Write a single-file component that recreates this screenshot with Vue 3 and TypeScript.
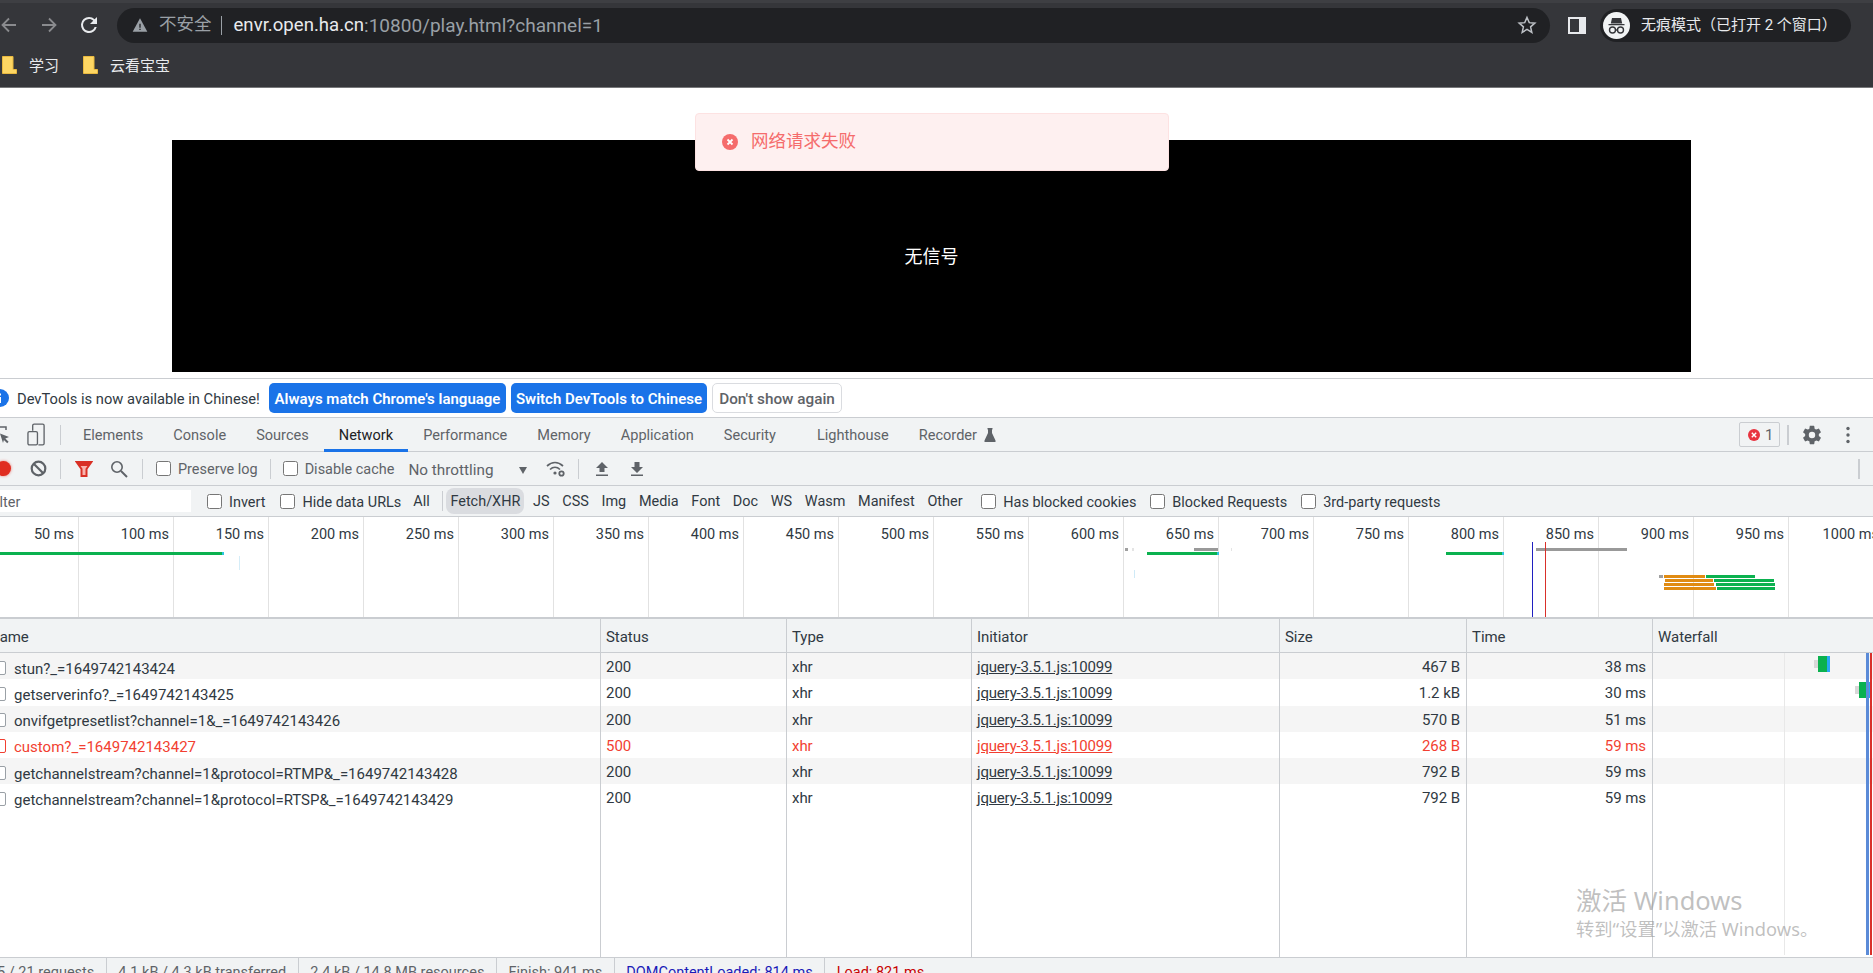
<script setup lang="ts">
const tabs = ['Elements', 'Console', 'Sources', 'Network', 'Performance', 'Memory', 'Application', 'Security', 'Lighthouse']
const types = ['All', 'Fetch/XHR', 'JS', 'CSS', 'Img', 'Media', 'Font', 'Doc', 'WS', 'Wasm', 'Manifest', 'Other']
const ticks = Array.from({ length: 20 }, (_, i) => (i + 1) * 50)
const tickX = (ms: number) => 77.5 + (ms / 50 - 1) * 95

interface Bar { x: number; y: number; w: number; c: string; h?: number }
const bars: Bar[] = [
  { x: 0, y: 552, w: 222, c: '#0bb14f' }, { x: 222, y: 552, w: 2, c: '#2bc4e0' },
  { x: 239, y: 556, w: 1, h: 14, c: '#d5edf8' },
  { x: 1125, y: 548, w: 3, c: '#a0a0a0' }, { x: 1132, y: 548, w: 2, c: '#e4e4e4' }, { x: 1231, y: 548, w: 1, c: '#e4e4e4' },
  { x: 1134, y: 570, w: 1, h: 8, c: '#cfeaf7' },
  { x: 1147, y: 552, w: 70, c: '#0bb14f' }, { x: 1217, y: 552, w: 2, c: '#2bc4e0' }, { x: 1194, y: 548, w: 24, c: '#999' },
  { x: 1446, y: 552, w: 56, c: '#0bb14f' }, { x: 1502, y: 552, w: 2, c: '#2bc4e0' },
  { x: 1536, y: 548, w: 91, c: '#999' },
  { x: 1659, y: 575, w: 4, c: '#a0a0a0' }, { x: 1664, y: 575, w: 41, c: '#e08b12' }, { x: 1706, y: 575, w: 49, c: '#0bb14f' },
  { x: 1665, y: 579, w: 48, c: '#e08b12' }, { x: 1714, y: 579, w: 60, c: '#0bb14f' },
  { x: 1664, y: 583, w: 50, c: '#e08b12' }, { x: 1716, y: 583, w: 59, c: '#0bb14f' },
  { x: 1664, y: 587, w: 52, c: '#e08b12' }, { x: 1717, y: 587, w: 58, c: '#0bb14f' }
]

interface Row { name: string; status: number; size: string; time: string; err?: boolean; fall?: number }
const rows: Row[] = [
  { name: 'stun?_=1649742143424', status: 200, size: '467 B', time: '38 ms', fall: 1814 },
  { name: 'getserverinfo?_=1649742143425', status: 200, size: '1.2 kB', time: '30 ms', fall: 1855 },
  { name: 'onvifgetpresetlist?channel=1&_=1649742143426', status: 200, size: '570 B', time: '51 ms' },
  { name: 'custom?_=1649742143427', status: 500, size: '268 B', time: '59 ms', err: true },
  { name: 'getchannelstream?channel=1&protocol=RTMP&_=1649742143428', status: 200, size: '792 B', time: '59 ms' },
  { name: 'getchannelstream?channel=1&protocol=RTSP&_=1649742143429', status: 200, size: '792 B', time: '59 ms' }
]
</script>

<template>
  <div class="page">
    <header class="chrome">
      <div class="nav-row">
        <svg class="ic back" viewBox="0 0 20 20"><path d="M17 10H4M10 3.5 3.5 10l6.5 6.5" fill="none" stroke="#8a8b8e" stroke-width="1.8" /></svg>
        <svg class="ic fwd" viewBox="0 0 20 20"><path d="M3 10h13M10 3.5l6.5 6.5-6.500 6.500" fill="none" stroke="#8a8b8e" stroke-width="1.8" /></svg>
        <svg class="ic reload" viewBox="0 0 24 24"><path fill="#e8eaed" d="M17.65 6.350A7.958 7.958 0 0 0 12 4a8 8 0 1 0 7.730 10h-2.080A6 6 0 1 1 12 6c1.660 0 3.140.690 4.220 1.780L13 11h7V4l-2.350 2.350z" /></svg>
        <div class="omnibox">
          <svg class="warn" viewBox="0 0 24 24"><path fill="#9aa0a6" d="M1 22h22L12 2 1 22z" /><path fill="#202124" d="M11 10h2v6h-2zM11 17.500h2v2h-2z" /></svg>
          <span class="insecure">不安全</span>
          <span class="sep"></span>
          <span class="host">envr.open.ha.cn</span><span class="path">:10800/play.html?channel=1</span>
          <svg class="star" viewBox="0 0 24 24"><path d="m12 3 2.700 6.200 6.700.6-5.100 4.400 1.500 6.600L12 17.300l-5.800 3.500 1.500-6.600-5.100-4.400 6.700-.6z" fill="none" stroke="#bdc1c6" stroke-width="1.800" /></svg>
        </div>
        <span class="side-panel"><i></i></span>
        <div class="incognito">
          <svg class="avatar" viewBox="0 0 27 27"><circle cx="13.500" cy="13.500" r="13.500" fill="#f1f3f4" /><path fill="#35363a" d="M9 6h9l1.200 5.500H7.800zM5.500 12h16v1.300h-16z" /><g fill="none" stroke="#35363a" stroke-width="1.400"><circle cx="9.500" cy="18" r="3" /><circle cx="17.500" cy="18" r="3" /><path d="M12.500 18h2" /></g></svg>
          <span class="inc-text">无痕模式（已打开 2 个窗口）</span>
        </div>
      </div>
      <div class="bookmarks">
        <svg class="folder" viewBox="0 0 15 18"><path fill="#fdd663" stroke="#e9b93f" d="M.5.500h10.500v13l3.500 0v4H.5z" /></svg>
        <span class="bm">学习</span>
        <svg class="folder folder-next" viewBox="0 0 15 18"><path fill="#fdd663" stroke="#e9b93f" d="M.5.500h10.500v13l3.500 0v4H.5z" /></svg>
        <span class="bm">云看宝宝</span>
      </div>
    </header>

    <main class="content">
      <div class="video">无信号</div>
      <div class="toast">
        <svg class="toast-ic" viewBox="0 0 16 16"><circle cx="8" cy="8" r="8" fill="#f56c6c" /><path d="m5.500 5.500 5 5m0-5-5 5" stroke="#fff" stroke-width="1.800" /></svg>
        <span class="toast-text">网络请求失败</span>
      </div>
    </main>

    <section class="devtools">
      <div class="infobar">
        <svg class="info" viewBox="0 0 18 18"><circle cx="9" cy="9" r="9" fill="#1a73e8" /><path fill="#fff" d="M8 8h2v6H8zM8 4.500h2v2H8z" /></svg>
        <span class="info-text">DevTools is now available in Chinese!</span>
        <button class="btn primary b1">Always match Chrome's language</button>
        <button class="btn primary b2">Switch DevTools to Chinese</button>
        <button class="btn plain">Don't show again</button>
      </div>

      <div class="tabbar">
        <svg class="inspect" viewBox="0 0 20 20"><path d="M1 2h14v3" fill="none" stroke="#5f6368" stroke-width="1.500" /><path fill="#5f6368" d="M9 8.500l9 3.500-3.700 1.500 3.300 3.300-1.400 1.400-3.300-3.300L12 18z" /></svg>
        <svg class="device" viewBox="0 0 20 24"><path fill="none" stroke="#5f6368" stroke-width="1.400" d="M6 8V2.500A1.500 1.500 0 0 1 7.500 1h9A1.500 1.500 0 0 1 18 2.500v19a1.500 1.500 0 0 1-1.500 1.500H12" /><rect x="1" y="9" width="10" height="14" rx="1.500" fill="none" stroke="#5f6368" stroke-width="1.400" /></svg>
        <span class="vline tab-sep"></span>
        <div class="tabs">
          <span v-for="t in tabs" :key="t" class="tab" :class="{ active: t === 'Network', gapped: t === 'Lighthouse' }">{{ t }}</span>
          <span class="tab rec">Recorder
            <svg class="flask" viewBox="0 0 12 14"><path fill="#5f6368" d="M3.500 0h5v1.500H8V5l3.500 7.500V14H.5v-1.500L4 5V1.500h-.5z" /></svg>
          </span>
        </div>
        <div class="tab-right">
          <span class="err-badge">
            <svg viewBox="0 0 14 14"><circle cx="7" cy="7" r="6" fill="#e8333f" /><path d="m4.800 4.800 4.400 4.400m0-4.400-4.400 4.400" stroke="#fff" stroke-width="1.400" /></svg>
            <b>1</b>
          </span>
          <span class="vline rsep"></span>
          <svg class="gear" viewBox="0 0 24 24"><path fill="#5f6368" d="M19.430 12.980c.040-.320.070-.640.070-.980s-.030-.660-.070-.980l2.110-1.650c.190-.150.240-.420.120-.640l-2-3.460c-.120-.220-.390-.300-.610-.220l-2.490 1c-.520-.400-1.080-.730-1.690-.980l-.380-2.650A.488.488 0 0 0 14 2h-4c-.250 0-.460.180-.490.420l-.380 2.650c-.610.250-1.170.590-1.690.980l-2.490-1a.566.566 0 0 0-.180-.030c-.170 0-.340.090-.430.250l-2 3.460c-.130.220-.070.490.120.640l2.110 1.650c-.040.320-.070.650-.070.980s.030.660.070.980l-2.110 1.650c-.190.150-.240.420-.120.640l2 3.460c.120.220.390.300.610.220l2.490-1c.520.400 1.080.730 1.690.980l.380 2.650c.030.240.240.420.490.420h4c.250 0 .460-.180.490-.420l.380-2.650c.610-.250 1.170-.590 1.690-.980l2.490 1c.060.020.120.030.180.030.170 0 .340-.090.430-.250l2-3.460c.120-.220.070-.490-.120-.640l-2.110-1.650zM12 15.500a3.500 3.500 0 1 1 0-7 3.500 3.500 0 0 1 0 7z" /></svg>
          <svg class="kebab" viewBox="0 0 4 18"><circle cx="2" cy="2.500" r="1.700" fill="#5f6368" /><circle cx="2" cy="9" r="1.700" fill="#5f6368" /><circle cx="2" cy="15.500" r="1.700" fill="#5f6368" /></svg>
        </div>
      </div>

      <div class="toolbar">
        <span class="record"></span>
        <svg class="clear" viewBox="0 0 17 17"><circle cx="8.500" cy="8.500" r="6.800" fill="none" stroke="#5f6368" stroke-width="2.200" /><path d="m4 4 9 9" stroke="#5f6368" stroke-width="2.200" /></svg>
        <span class="vline t1"></span>
        <svg class="funnel" viewBox="0 0 18 18"><path d="M1.500 2h15l-5 7v7h-5V9z" fill="#f8b4ae" stroke="#d93025" stroke-width="2" /><path d="M1.500 2h15L13.500 6h-9z" fill="#d93025" /></svg>
        <svg class="search" viewBox="0 0 18 18"><circle cx="7" cy="7" r="5.200" fill="none" stroke="#5f6368" stroke-width="1.600" /><path d="m11 11 6 6" stroke="#5f6368" stroke-width="2" /></svg>
        <span class="vline t2"></span>
        <input class="cb c1" type="checkbox" aria-label="Preserve log" />
        <span class="lbl">Preserve log</span>
        <span class="vline t3"></span>
        <input class="cb c2" type="checkbox" aria-label="Disable cache" />
        <span class="lbl">Disable cache</span>
        <span class="throttle">No throttling<i></i></span>
        <svg class="wifi" viewBox="0 0 20 18"><g fill="none" stroke="#5f6368" stroke-width="1.700"><path d="M1 6c5-4.500 11-4.500 16 0" /><path d="M4 9.500c3-2.800 7-2.800 10 0" /></g><circle cx="9" cy="13" r="1.600" fill="#5f6368" /><circle cx="15.500" cy="13.500" r="2.200" fill="none" stroke="#5f6368" stroke-width="1.800" /></svg>
        <span class="vline t4"></span>
        <svg class="updown up" viewBox="0 0 14 16"><path fill="#5f6368" d="M7 1l6 6H9.500v4h-5V7H1zM1 13.500h12V15H1z" /></svg>
        <svg class="updown down" viewBox="0 0 14 16"><path fill="#5f6368" d="M4.500 1h5v5H13l-6 6-6-6h3.500zM1 13.500h12V15H1z" /></svg>
        <span class="vline t5"></span>
      </div>

      <div class="filterbar">
        <div class="filter-input">Filter</div>
        <input class="cb f1" type="checkbox" aria-label="Invert" />
        <span class="lbl">Invert</span>
        <input class="cb f2" type="checkbox" aria-label="Hide data URLs" />
        <span class="lbl">Hide data URLs</span>
        <div class="types">
          <template v-for="t in types" :key="t">
            <span class="type" :class="{ on: t === 'Fetch/XHR' }">{{ t }}</span>
            <span v-if="t === 'All'" class="vline ty-sep"></span>
          </template>
        </div>
        <input class="cb f3" type="checkbox" aria-label="Has blocked cookies" />
        <span class="lbl">Has blocked cookies</span>
        <input class="cb f4" type="checkbox" aria-label="Blocked Requests" />
        <span class="lbl">Blocked Requests</span>
        <input class="cb f4" type="checkbox" aria-label="3rd-party requests" />
        <span class="lbl">3rd-party requests</span>
      </div>

      <div class="overview">
        <template v-for="m in ticks" :key="m">
          <span class="gridline" :style="{ left: tickX(m) + 'px' }"></span>
          <span class="tick" :style="{ right: 1873 - tickX(m) + 3.500 + 'px' }">{{ m }} ms</span>
        </template>
        <span v-for="(b, i) in bars" :key="i" class="obar" :style="{ left: b.x + 'px', top: b.y - 517 + 'px', width: b.w + 'px', height: (b.h ?? 3) + 'px', background: b.c }"></span>
        <span class="marker blue"></span>
        <span class="marker red"></span>
      </div>

      <div class="table">
        <div class="tr head">
          <div class="td name-h">Name</div>
          <div class="td">Status</div>
          <div class="td">Type</div>
          <div class="td">Initiator</div>
          <div class="td">Size</div>
          <div class="td">Time</div>
          <div class="td last">Waterfall</div>
        </div>
        <div v-for="(r, i) in rows" :key="r.name" class="tr row" :class="{ odd: i % 2 === 0, err: r.err }">
          <div class="td nm"><i class="file"></i><span class="nm-text">{{ r.name }}</span></div>
          <div class="td">{{ r.status }}</div>
          <div class="td">xhr</div>
          <div class="td"><u>jquery-3.5.1.js:10099</u></div>
          <div class="td num">{{ r.size }}</div>
          <div class="td num">{{ r.time }}</div>
          <div class="td last">
            <template v-if="r.fall">
              <span class="fb wait" :style="{ left: r.fall - 1653 + 'px' }"></span>
              <span class="fb recv" :style="{ left: r.fall + 4 - 1653 + 'px' }"></span>
              <span class="fb dl" :style="{ left: r.fall + 13 - 1653 + 'px' }"></span>
            </template>
          </div>
        </div>
        <div class="tr filler">
          <div class="td"></div><div class="td"></div><div class="td"></div><div class="td"></div><div class="td"></div><div class="td"></div><div class="td last"></div>
        </div>
        <span class="wline light"></span>
        <span class="wline wblue"></span>
        <span class="wline wred"></span>
      </div>

      <footer class="status">
        <span class="st first">5 / 21 requests</span>
        <span class="st">4.1 kB / 4.3 kB transferred</span>
        <span class="st">2.4 kB / 14.8 MB resources</span>
        <span class="st">Finish: 941 ms</span>
        <span class="st dcl">DOMContentLoaded: 814 ms</span>
        <span class="st load">Load: 821 ms</span>
      </footer>
    </section>

    <div class="watermark">
      <div class="wm1">激活 Windows</div>
      <div class="wm2">转到“设置”以激活 Windows。</div>
    </div>
  </div>
</template>

<style>
html, body { margin: 0; background: #fff; overflow: hidden; }
</style>

<style scoped>
.page { position: relative; width: 1873px; height: 973px; overflow: hidden; display: flex; flex-direction: column; font: 15px Roboto, "Noto Sans CJK SC", sans-serif; color: #303942; background: #fff; }
.chrome { flex: none; background: #35363a; border-top: 3px solid #3e3f43; border-bottom: 1px solid #77787a; box-sizing: content-box; height: 84px; font-family: Roboto, "Noto Sans CJK SC", sans-serif; }
.nav-row { display: flex; align-items: center; height: 40px; padding-top: 4px; box-sizing: border-box; }
.ic { flex: none; }
.back { width: 20px; height: 20px; margin-left: -1px; }
.fwd { width: 20px; height: 20px; margin-left: 20px; }
.reload { width: 24px; height: 24px; margin-left: 18px; }
.omnibox { display: flex; align-items: center; width: 1433px; height: 35px; margin-left: 16px; background: #202124; border-radius: 18px; flex: none; }
.warn { width: 16px; height: 16px; margin-left: 15px; }
.insecure { margin: 0 0 5px 11px; font-size: 17.500px; color: #9aa0a6; }
.sep { width: 1px; height: 19px; margin: 0 12px 0 9px; background: #9aa0a6; }
.host { color: #e8eaed; font-size: 18.600px; }
.path { color: #9aa0a6; font-size: 19px; }
.star { width: 20px; height: 20px; margin-left: auto; margin-right: 13px; }
.side-panel { flex: none; display: block; box-sizing: border-box; width: 18px; height: 17px; margin-left: 18px; border: 2px solid #e8eaed; background: #35363a; position: relative; }
.side-panel i { position: absolute; right: -1px; top: -1px; bottom: -1px; width: 6px; background: #e8eaed; }
.incognito { flex: none; display: flex; align-items: center; width: 251px; height: 33px; box-sizing: border-box; margin-left: 14px; padding-left: 3px; background: #202124; border-radius: 17px; color: #e8eaed; font-size: 15px; }
.inc-text { margin-bottom: 4px; }
.avatar { width: 27px; height: 27px; flex: none; margin-right: 11px; }
.bookmarks { display: flex; align-items: center; height: 44px; }
.folder { width: 15px; height: 18px; margin-left: 2px; flex: none; }
.folder-next { margin-left: 24px; }
.bm { color: #e8eaed; font-size: 15px; margin: 0 0 1px 12px; }

.content { position: relative; height: 290px; flex: none; }
.video { width: 1519px; height: 232px; margin: 52px 0 0 172px; padding-bottom: 3px; box-sizing: border-box; background: #000; color: #fff; font-size: 18px; display: flex; align-items: center; justify-content: center; }
.toast { position: absolute; left: 695px; top: 25px; width: 474px; height: 58px; box-sizing: border-box; display: flex; align-items: center; padding-left: 26px; background: #fef0f0; border: 1px solid #fde2e2; border-radius: 4px; color: #f56c6c; font-size: 17.500px; }
.toast-text { margin-bottom: 5px; }
.toast-ic { width: 16px; height: 16px; margin-right: 13px; }

.devtools { flex: 1; min-height: 0; display: flex; flex-direction: column; border-top: 1px solid #cacdd1; background: #fff; }
.infobar { height: 38px; display: flex; align-items: center; flex: none; background: #fff; }
.info { width: 18px; height: 18px; margin-left: -9px; flex: none; }
.info-text { margin-left: 8px; width: 252px; padding-top: 2px; font-size: 14.700px; white-space: nowrap; }
.btn { height: 30px; font: 600 15px Roboto, sans-serif; border-radius: 5px; padding: 2px 0 0; box-sizing: border-box; flex: none; }
.primary { background: #1a73e8; color: #fff; border: none; }
.b1 { width: 237px; }
.b2 { width: 196px; margin-left: 5px; }
.plain { width: 130px; margin-left: 5px; background: #fff; color: #5f6368; border: 1px solid #dadce0; font-weight: 500; font-size: 15.300px; }

.tabbar, .toolbar, .filterbar { flex: none; display: flex; align-items: center; background: #f1f3f4; border-top: 1px solid #cacdd1; box-sizing: border-box; font-size: 14.450px; }
.tabbar { height: 34px; color: #5f6368; font-size: 14.550px; }
.vline { flex: none; display: block; width: 1px; height: 20px; background: #cacdd1; }
.inspect { width: 20px; height: 20px; margin-left: -9px; flex: none; }
.device { width: 19px; height: 23px; margin-left: 16px; flex: none; }
.tab-sep { margin-left: 14px; }
.tabs { display: flex; align-self: stretch; margin-left: 7px; }
.tab { display: flex; align-items: center; padding: 1px 15px 0; position: relative; }
.tab.active { color: #202124; }
.tab.active::after { content: ""; position: absolute; left: 0; right: 0; bottom: -1px; height: 3px; background: #1a73e8; }
.tab.gapped { margin-left: 11px; }
.flask { width: 12px; height: 14px; margin-left: 7px; }
.tab-right { margin-left: auto; display: flex; align-items: center; }
.err-badge { box-sizing: border-box; width: 41px; height: 25px; display: flex; align-items: center; padding-left: 7px; border: 1px solid #cacdd1; border-radius: 2px; font-size: 15px; }
.err-badge svg { width: 14px; height: 14px; }
.err-badge b { font-weight: 400; margin-left: 4px; }
.rsep { margin-left: 7px; height: 20px; width: 2px; }
.gear { width: 22px; height: 22px; margin-left: 12px; }
.kebab { width: 4px; height: 18px; margin: 0 23px 0 23px; }

.toolbar { height: 34px; color: #5f6368; }
.record { flex: none; width: 15px; height: 15px; margin-left: -4px; border-radius: 50%; background: #e02c20; box-shadow: 0 0 3px #e8746c; }
.clear { flex: none; width: 17px; height: 17px; margin-left: 19px; }
.t1 { margin-left: 13px; }
.funnel { flex: none; width: 18px; height: 18px; margin-left: 14px; }
.search { flex: none; width: 18px; height: 18px; margin-left: 17px; }
.t2 { margin-left: 14px; }
.cb { flex: none; margin: 0; width: 15px; height: 15px; }
.c1 { margin-left: 13px; }
.lbl { margin-left: 7px; padding-top: 2px; white-space: nowrap; }
.t3 { margin-left: 12px; }
.c2 { margin-left: 12px; }
.throttle { position: relative; flex: none; width: 119px; margin-left: 14px; padding-top: 2px; font-size: 15.300px; }
.throttle i { position: absolute; right: 0; top: 8px; border-left: 4.500px solid transparent; border-right: 4.500px solid transparent; border-top: 7px solid #5f6368; }
.wifi { flex: none; width: 20px; height: 18px; margin-left: 19px; }
.t4 { margin-left: 12px; }
.updown { flex: none; width: 14px; height: 16px; }
.up { margin-left: 16px; }
.down { margin-left: 21px; }
.t5 { margin-left: auto; margin-right: 13px; width: 2px; }

.filterbar { height: 31px; color: #303942; }
.filter-input { flex: none; width: 191px; height: 22px; line-height: 25px; background: #fff; text-indent: -12px; color: #5f6368; overflow: hidden; }
.f1 { margin-left: 16px; }
.f2 { margin-left: 15px; }
.f3 { margin-left: 10px; }
.f4 { margin-left: 14px; }
.types { display: flex; align-items: center; margin-left: 8px; }
.type { padding: 0 4px; margin-right: 4.700px; height: 26px; line-height: 28px; border-radius: 8px; }
.type.on { background: #dadce0; }
.ty-sep { margin: 0 3px 0 4px; }

.overview { position: relative; flex: none; height: 103px; box-sizing: border-box; border-top: 1px solid #cacdd1; border-bottom: 2px solid #cacdd1; background: #fff; overflow: hidden; }
.gridline { position: absolute; top: 0; bottom: 0; width: 1px; background: #e2e2e2; }
.tick { position: absolute; top: 8px; white-space: nowrap; color: #303942; font-size: 14.500px; line-height: 20px; }
.obar { position: absolute; }
.marker { position: absolute; top: 25px; bottom: 0; width: 1px; }
.marker.blue { left: 1532px; background: #2020c0; }
.marker.red { left: 1545px; background: #d9302a; }

.table { position: relative; flex: 1; min-height: 0; display: flex; flex-direction: column; letter-spacing: -0.050px; }
.tr { display: grid; grid-template-columns: 601px 186px 185px 308px 187px 186px 1fr; }
.td { border-right: 1px solid #cacdd1; padding: 0 5px; white-space: nowrap; min-width: 0; box-sizing: border-box; position: relative; }
.td u { letter-spacing: -0.180px; }
.td.last { border-right: none; }
.head { height: 34px; flex: none; background: #f1f3f4; border-bottom: 1px solid #cacdd1; box-sizing: border-box; line-height: 36px; }
.name-h { text-indent: -16px; }
.row { height: 26.250px; flex: none; line-height: 29px; background: #fff; }
.row.odd { background: #f5f5f5; }
.row.err { color: #f23f31; }
.nm { display: flex; align-items: center; padding-left: 0; overflow: hidden; letter-spacing: 0; }
.nm-text { padding-top: 2px; line-height: 26px; }
.file { flex: none; display: block; box-sizing: border-box; width: 11px; height: 14px; margin: 0 8px 0 -5px; border: 1px solid #9aa0a6; border-radius: 2px; background: #fff; }
.row.err .file { border-color: #f23f31; }
.num { text-align: right; padding-right: 6px; }
.filler { flex: 1; min-height: 0; }
.fb { position: absolute; }
.wait { top: 7px; width: 4px; height: 8px; background: #d8d8d8; }
.recv { top: 3px; width: 9px; height: 16px; background: #0bb14f; }
.dl { top: 3px; width: 3px; height: 16px; background: #29a8f5; }
.wline { position: absolute; top: 34px; bottom: 2px; }
.light { left: 1784px; width: 1px; background: #e8e8e8; }
.wblue { left: 1866px; width: 3px; background: #5b8bd8; }
.wred { left: 1870px; width: 1.500px; background: #d9302a; }

.status { flex: none; height: 16px; display: flex; align-items: flex-start; background: #f1f3f4; border-top: 1px solid #cacdd1; box-sizing: border-box; color: #5f6368; overflow: hidden; line-height: 30px; font-size: 14.500px; }
.st { padding: 0 11.500px; border-right: 1px solid #cacdd1; white-space: nowrap; }
.st.first { margin-left: -3px; padding-left: 0; }
.dcl { color: #1a1ab8; }
.load { color: #c80000; border-right: none; }

.watermark { position: absolute; left: 1576px; top: 883px; pointer-events: none; color: rgba(150, 150, 150, 0.6); font-family: "Noto Sans", "Noto Sans CJK SC", sans-serif; white-space: nowrap; }
.wm1 { font-size: 25.500px; line-height: 34px; }
.wm2 { font-size: 18.300px; line-height: 24px; }
</style>
